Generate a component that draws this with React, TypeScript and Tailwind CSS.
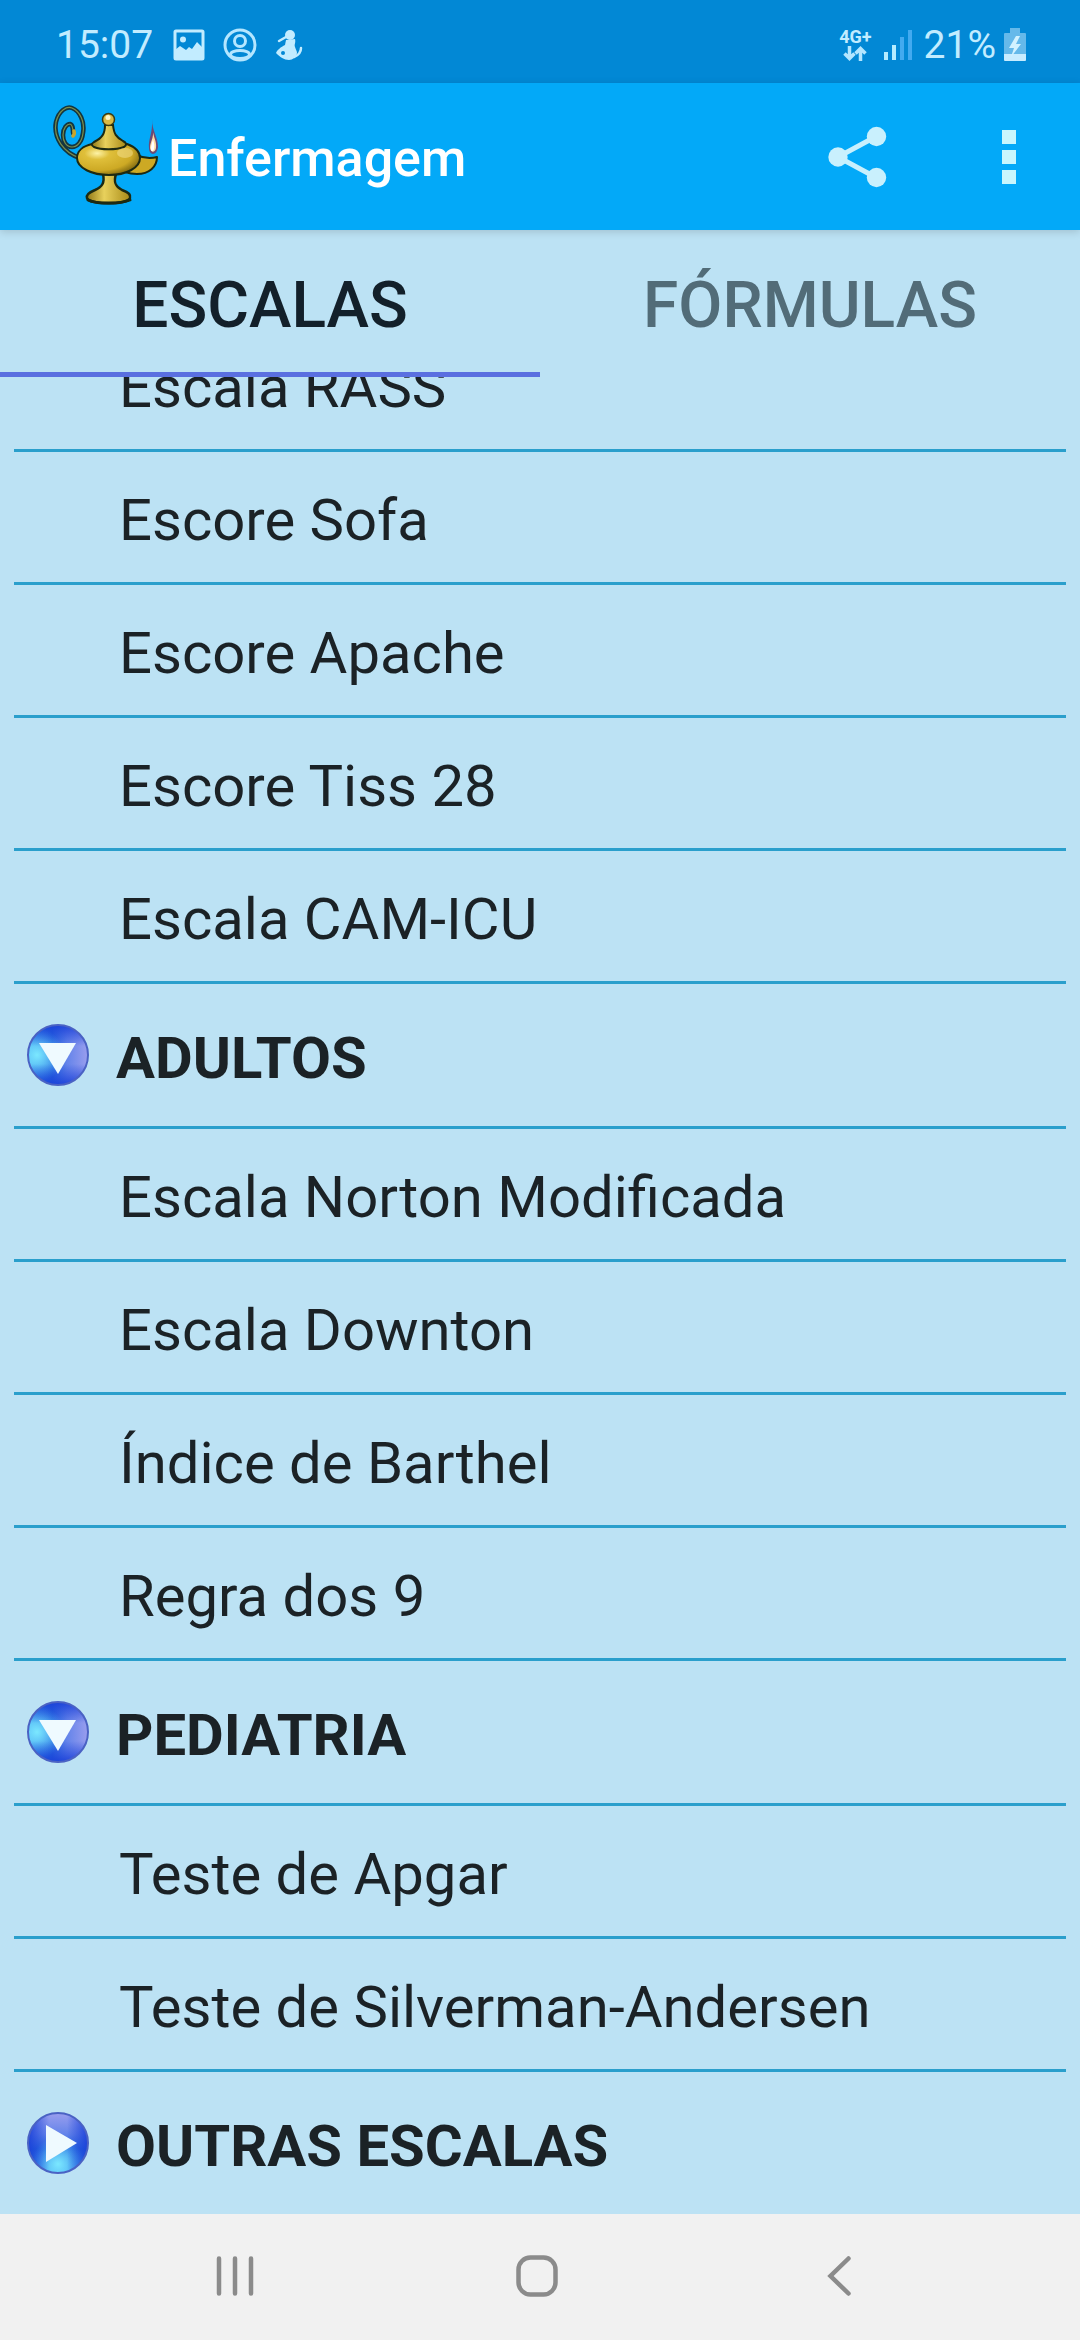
import { useLayoutEffect, useRef, useState } from "react";

type Group = {
  id: string;
  title: string | null;
  items: string[];
};

const groups: Group[] = [
  {
    id: "uti",
    title: null,
    items: [
      "Escala RASS",
      "Escore Sofa",
      "Escore Apache",
      "Escore Tiss 28",
      "Escala CAM-ICU",
    ],
  },
  {
    id: "adultos",
    title: "ADULTOS",
    items: [
      "Escala Norton Modificada",
      "Escala Downton",
      "Índice de Barthel",
      "Regra dos 9",
    ],
  },
  {
    id: "pediatria",
    title: "PEDIATRIA",
    items: ["Teste de Apgar", "Teste de Silverman-Andersen"],
  },
  { id: "outras", title: "OUTRAS ESCALAS", items: [] },
];

const tabs = ["ESCALAS", "FÓRMULAS"];

const PictureIcon = () => (
  <svg width="32" height="32" viewBox="0 0 32 32" fill="none">
    <rect x="2" y="2" width="28" height="28" rx="1" stroke="#c2ecff" strokeWidth="3" />
    <circle cx="10" cy="10.500" r="3" fill="#c2ecff" />
    <path d="M2 21l5-4 6 4 3-3 3 2 5-7 6 6v11H2z" fill="#c2ecff" />
  </svg>
);

const AccountIcon = () => (
  <svg width="34" height="34" viewBox="0 0 34 34" fill="none" stroke="#b4e6ff" strokeWidth="3">
    <circle cx="17" cy="17" r="15" />
    <circle cx="17" cy="13" r="5.500" />
    <ellipse cx="17" cy="26.500" rx="9.500" ry="4" />
  </svg>
);

const MotherIcon = () => (
  <svg width="28" height="32" viewBox="0 0 28 32" fill="none">
    <circle cx="15" cy="6" r="5" fill="#c2ecff" />
    <path
      d="M11 11l9-1c1 4-1 5 0 8 1 3 2 4 2 6-1 4-4 7-8 7-5 0-9-3-13-7 1-3 5-6 9-8z"
      fill="#c2ecff"
    />
    <path d="M4 12l7-4M19 28c5-2 7-5 7-9" stroke="#c2ecff" strokeWidth="2.500" strokeLinecap="round" />
    <circle cx="8" cy="24" r="2" fill="#0288d5" />
  </svg>
);

const DataArrowsIcon = () => (
  <svg width="24" height="15" viewBox="0 0 24 15" fill="none" stroke="#b4e6ff" strokeWidth="3.500">
    <path d="M6.500 0v12M1.500 7.500l5 5 5-5M17.500 15V3M12.500 7.500l5-5 5 5" />
  </svg>
);

const SignalIcon = () => (
  <svg width="28" height="32" viewBox="0 0 28 32">
    <rect x="0" y="23" width="4" height="8" fill="#b4ecff" />
    <rect x="8" y="16" width="4" height="15" fill="#b4ecff" />
    <rect x="16" y="8" width="4" height="23" fill="#42aaf0" />
    <rect x="24" y="1" width="4" height="30" fill="#42aaf0" />
  </svg>
);

const BatteryIcon = () => (
  <svg width="22" height="34" viewBox="0 0 22 34">
    <path d="M6 0h10v5h5q1 0 1 1v21H0V6q0-1 1-1h5z" fill="#65b9ea" />
    <path d="M0 26h22v6q0 1-1 1H1q-1 0-1-1z" fill="#c8ecff" />
    <path d="M12 8L5 20h5l-3 9 10-13h-5l4-8z" fill="#d2f2ff" />
  </svg>
);

const LampIcon = () => (
  <svg width="108" height="104" viewBox="0 0 108 104" fill="none">
    <defs>
      <radialGradient id="lampBody" cx="0.32" cy="0.3" r="0.8">
        <stop offset="0" stopColor="#fdf3a6" />
        <stop offset="0.25" stopColor="#dfbf3a" />
        <stop offset="0.7" stopColor="#cda924" />
        <stop offset="1" stopColor="#6d5a0c" />
      </radialGradient>
      <linearGradient id="lampMetal" x1="0" y1="0" x2="1" y2="0">
        <stop offset="0" stopColor="#8f7715" />
        <stop offset="0.4" stopColor="#e8d15c" />
        <stop offset="1" stopColor="#a88a18" />
      </linearGradient>
    </defs>
    {/* handle */}
    <path
      d="M28 53C12 48 1 33 4 17 7 5 15 1 20 3c8 3 13 14 11 25-1 9-6 14-11 14-6 0-9-6-9-12 0-7 4-11 7-11 3 1 3 5 3 9"
      stroke="#143640"
      strokeWidth="4.500"
      strokeLinecap="round"
    />
    <path
      d="M28 53C12 48 1 33 4 17 7 5 15 1 20 3c8 3 13 14 11 25-1 9-6 14-11 14-6 0-9-6-9-12 0-7 4-11 7-11 3 1 3 5 3 9"
      stroke="#7d8f4a"
      strokeWidth="1.200"
      strokeLinecap="round"
    />
    <path d="M22 26q1 3-1 5" stroke="#c8a52c" strokeWidth="3.500" strokeLinecap="round" />
    {/* foot */}
    <path
      d="M51 69h13c-3 9 0 13 6 16 6 2 9 5 8 8-3 7-40 7-43 0-1-3 3-6 8-8 7-3 10-7 8-16z"
      fill="url(#lampMetal)"
      stroke="#1d2a12"
      strokeWidth="2.500"
    />
    <path d="M36 95c8 4 33 4 42 0" stroke="#1d2a12" strokeWidth="3" strokeLinecap="round" />
    {/* spout */}
    <path
      d="M84 50c7 3 13 4 21 2 0 10-8 17-20 17-5 0-9-1-12-2z"
      fill="#cda924"
    />
    <path
      d="M84 50c7 3 13 4 21 2 0 10-8 17-20 17-5 0-9-1-12-2"
      stroke="#1d2a12"
      strokeWidth="2"
      strokeLinejoin="round"
    />
    {/* body */}
    <path
      d="M40 39c-9 2-15 7-15 14 0 10 15 17 32 17s31-7 31-17c0-7-5-11-13-14z"
      fill="url(#lampBody)"
      stroke="#1d2a12"
      strokeWidth="2"
    />
    <path
      d="M53 20h8c1 9 3 12 10 16 4 2 4 4 1 6-8 3-23 3-30 0-3-2-3-3 0-5 8-4 11-8 11-17z"
      fill="url(#lampMetal)"
      stroke="#1d2a12"
      strokeWidth="2"
    />
    <circle cx="56.500" cy="14.500" r="6" fill="#d8ba45" stroke="#3a3a12" strokeWidth="1.500" />
    <circle cx="56" cy="12.500" r="2.500" fill="#fff7c8" />
    <ellipse cx="73" cy="48" rx="8" ry="5" fill="#fff0b0" opacity="0.4" />
    {/* flame */}
    <path d="M100 14c0 12 6 18 6 28-1 9-9 9-9 1-1-9 4-15 3-29z" fill="#6a4a78" />
    <path d="M101 25c0 7 4 11 3 18-1 5-5 5-6 0 0-6 4-10 3-18z" fill="#ffd9a0" />
    <path d="M101 34c1 4 2 7 1 10-1 3-3 3-3 0 0-4 1-6 2-10z" fill="#fff" />
  </svg>
);

const ShareIcon = () => (
  <svg width="60" height="62" viewBox="0 0 60 62" fill="#c9f0fd">
    <path d="M48 10.500L10 31l38 20.500" fill="none" stroke="#c9f0fd" strokeWidth="5" />
    <circle cx="10" cy="31" r="9.700" />
    <circle cx="48.500" cy="10.500" r="9.700" />
    <circle cx="48.500" cy="51.500" r="9.700" />
  </svg>
);

const OverflowIcon = () => (
  <svg width="14" height="54" viewBox="0 0 14 54" fill="#c9f6fd">
    <rect width="14" height="14" />
    <rect y="20" width="14" height="14" />
    <rect y="40" width="14" height="14" />
  </svg>
);

const GroupIcon = ({ open }: { open: boolean }) => (
  <svg width="64" height="64" viewBox="0 0 64 64" className={open ? "rotate-90" : ""}>
    <defs>
      <linearGradient id="orb" x1="0" y1="0" x2="0" y2="1">
        <stop offset="0" stopColor="#9a9eee" />
        <stop offset="0.35" stopColor="#6484ea" />
        <stop offset="0.6" stopColor="#2668e0" />
        <stop offset="1" stopColor="#3fa0f0" />
      </linearGradient>
      <radialGradient id="orbGlow" cx="0.5" cy="0.85" r="0.45">
        <stop offset="0" stopColor="#7be8ff" />
        <stop offset="1" stopColor="#7be8ff" stopOpacity="0" />
      </radialGradient>
      <linearGradient id="orbSides" x1="0" y1="0" x2="1" y2="0">
        <stop offset="0" stopColor="#1a3fd8" stopOpacity="0.9" />
        <stop offset="0.35" stopColor="#1a3fd8" stopOpacity="0" />
        <stop offset="0.65" stopColor="#1a3fd8" stopOpacity="0" />
        <stop offset="1" stopColor="#1a3fd8" stopOpacity="0.9" />
      </linearGradient>
    </defs>
    <circle cx="32" cy="32" r="30" fill="url(#orb)" />
    <circle cx="32" cy="32" r="30" fill="url(#orbGlow)" />
    <circle cx="32" cy="32" r="30" fill="url(#orbSides)" stroke="#4a62c4" strokeWidth="2" />
    <path d="M20 14v37l31-19z" fill="#effaff" />
  </svg>
);

const RecentsIcon = () => (
  <svg width="38" height="40" viewBox="0 0 38 40" stroke="#8b8b8b" strokeWidth="4.500" strokeLinecap="round">
    <path d="M3 2.500v35M19 2.500v35M35 2.500v35" />
  </svg>
);

const HomeIcon = () => (
  <svg width="42" height="42" viewBox="0 0 42 42" fill="none">
    <rect x="2.500" y="2.500" width="37" height="37" rx="12" stroke="#8b8b8b" strokeWidth="4.500" />
  </svg>
);

const BackIcon = () => (
  <svg width="24" height="40" viewBox="0 0 24 40" fill="none" stroke="#8b8b8b" strokeWidth="4.500" strokeLinecap="round">
    <path d="M21.500 2.500L3.500 20l18 17.500" />
  </svg>
);

const StatusBar = () => (
  <div className="flex h-[83px] shrink-0 items-center justify-between bg-[#0288d5] pt-[6px] pr-[54px] pl-14 text-[39px] leading-[48px] text-[#c2ecff]">
    <div className="flex items-center">
      <span>15:07</span>
      <div className="ml-5 flex items-center gap-[18px]">
        <PictureIcon />
        <AccountIcon />
        <MotherIcon />
      </div>
    </div>
    <div className="flex items-center gap-3">
      <div className="flex flex-col items-center">
        <span className="text-[18px] leading-[18px] font-bold">4G+</span>
        <DataArrowsIcon />
      </div>
      <SignalIcon />
      <div className="flex items-center gap-2">
        <span>21%</span>
        <BatteryIcon />
      </div>
    </div>
  </div>
);

const AppBar = () => (
  <header className="z-10 flex h-[147px] shrink-0 items-center bg-[#03a9f8] pl-[52px] shadow-[0_2px_8px_rgba(0,0,0,0.15)]">
    <LampIcon />
    <h1 className="ml-2 flex-1 pt-1 text-[52px] leading-[64px] font-medium text-white">
      Enfermagem
    </h1>
    <button type="button" aria-label="Compartilhar" className="flex h-full w-40 items-center justify-center">
      <ShareIcon />
    </button>
    <button type="button" aria-label="Mais opções" className="flex h-full w-[142px] items-center justify-center">
      <OverflowIcon />
    </button>
  </header>
);

const GroupHeader = ({
  title,
  open,
  onToggle,
}: {
  title: string;
  open: boolean;
  onToggle: () => void;
}) => (
  <button
    type="button"
    aria-expanded={open}
    onClick={onToggle}
    className="flex h-[142px] w-full items-center gap-[26px] pl-3 text-left text-[58px] leading-[68px] font-bold"
  >
    <GroupIcon open={open} />
    <span className="pt-[6px]">{title}</span>
  </button>
);

const App = () => {
  const [activeTab, setActiveTab] = useState(tabs[0]);
  const [openGroups, setOpenGroups] = useState(["uti", "adultos", "pediatria"]);
  const listRef = useRef<HTMLElement>(null);

  // Start with the first row partly scrolled under the tabs
  useLayoutEffect(() => {
    if (listRef.current) listRef.current.scrollTop = 58;
  }, []);

  const toggleGroup = (id: string) => {
    setOpenGroups((current) =>
      current.includes(id) ? current.filter((g) => g !== id) : [...current, id]
    );
  };

  return (
    <div className="flex h-screen flex-col bg-[#bce2f4] font-[Roboto,sans-serif] text-[#1b2226]">
      <StatusBar />
      <AppBar />
      <div role="tablist" className="grid h-[147px] shrink-0 grid-cols-2">
        {tabs.map((tab) => (
          <button
            key={tab}
            type="button"
            role="tab"
            aria-selected={tab === activeTab}
            onClick={() => setActiveTab(tab)}
            className={`border-b-5 pt-[10px] text-[64px] leading-[76px] font-medium ${
              tab === activeTab
                ? "border-[#5a6fe0] text-[#13202a]"
                : "border-transparent text-[#526c78]"
            }`}
          >
            {tab}
          </button>
        ))}
      </div>
      <main
        ref={listRef}
        className="min-h-0 flex-1 overflow-y-auto px-[14px] [scrollbar-width:none]"
      >
        {groups.map(({ id, title, items }) => {
          const open = openGroups.includes(id);
          return (
            <section key={id}>
              {title && (
                <div className="border-b-3 border-[#2a9fcc]">
                  <GroupHeader
                    title={title}
                    open={open}
                    onToggle={() => toggleGroup(id)}
                  />
                </div>
              )}
              {open && (
                <ul>
                  {items.map((item) => (
                    <li key={item} className="border-b-3 border-[#2a9fcc]">
                      <a
                        href="#"
                        className="flex h-[130px] items-center pt-[6px] pl-[105px] text-[58px] leading-[68px]"
                      >
                        {item}
                      </a>
                    </li>
                  ))}
                </ul>
              )}
            </section>
          );
        })}
      </main>
      <nav className="grid h-[126px] shrink-0 grid-cols-3 bg-[#f1f1f1] pr-[90px] pb-[2px] pl-[84px]">
        <button type="button" aria-label="Recentes" className="flex items-center justify-center">
          <RecentsIcon />
        </button>
        <button type="button" aria-label="Início" className="flex items-center justify-center">
          <HomeIcon />
        </button>
        <button type="button" aria-label="Voltar" className="flex items-center justify-center">
          <BackIcon />
        </button>
      </nav>
    </div>
  );
};

export default App;
